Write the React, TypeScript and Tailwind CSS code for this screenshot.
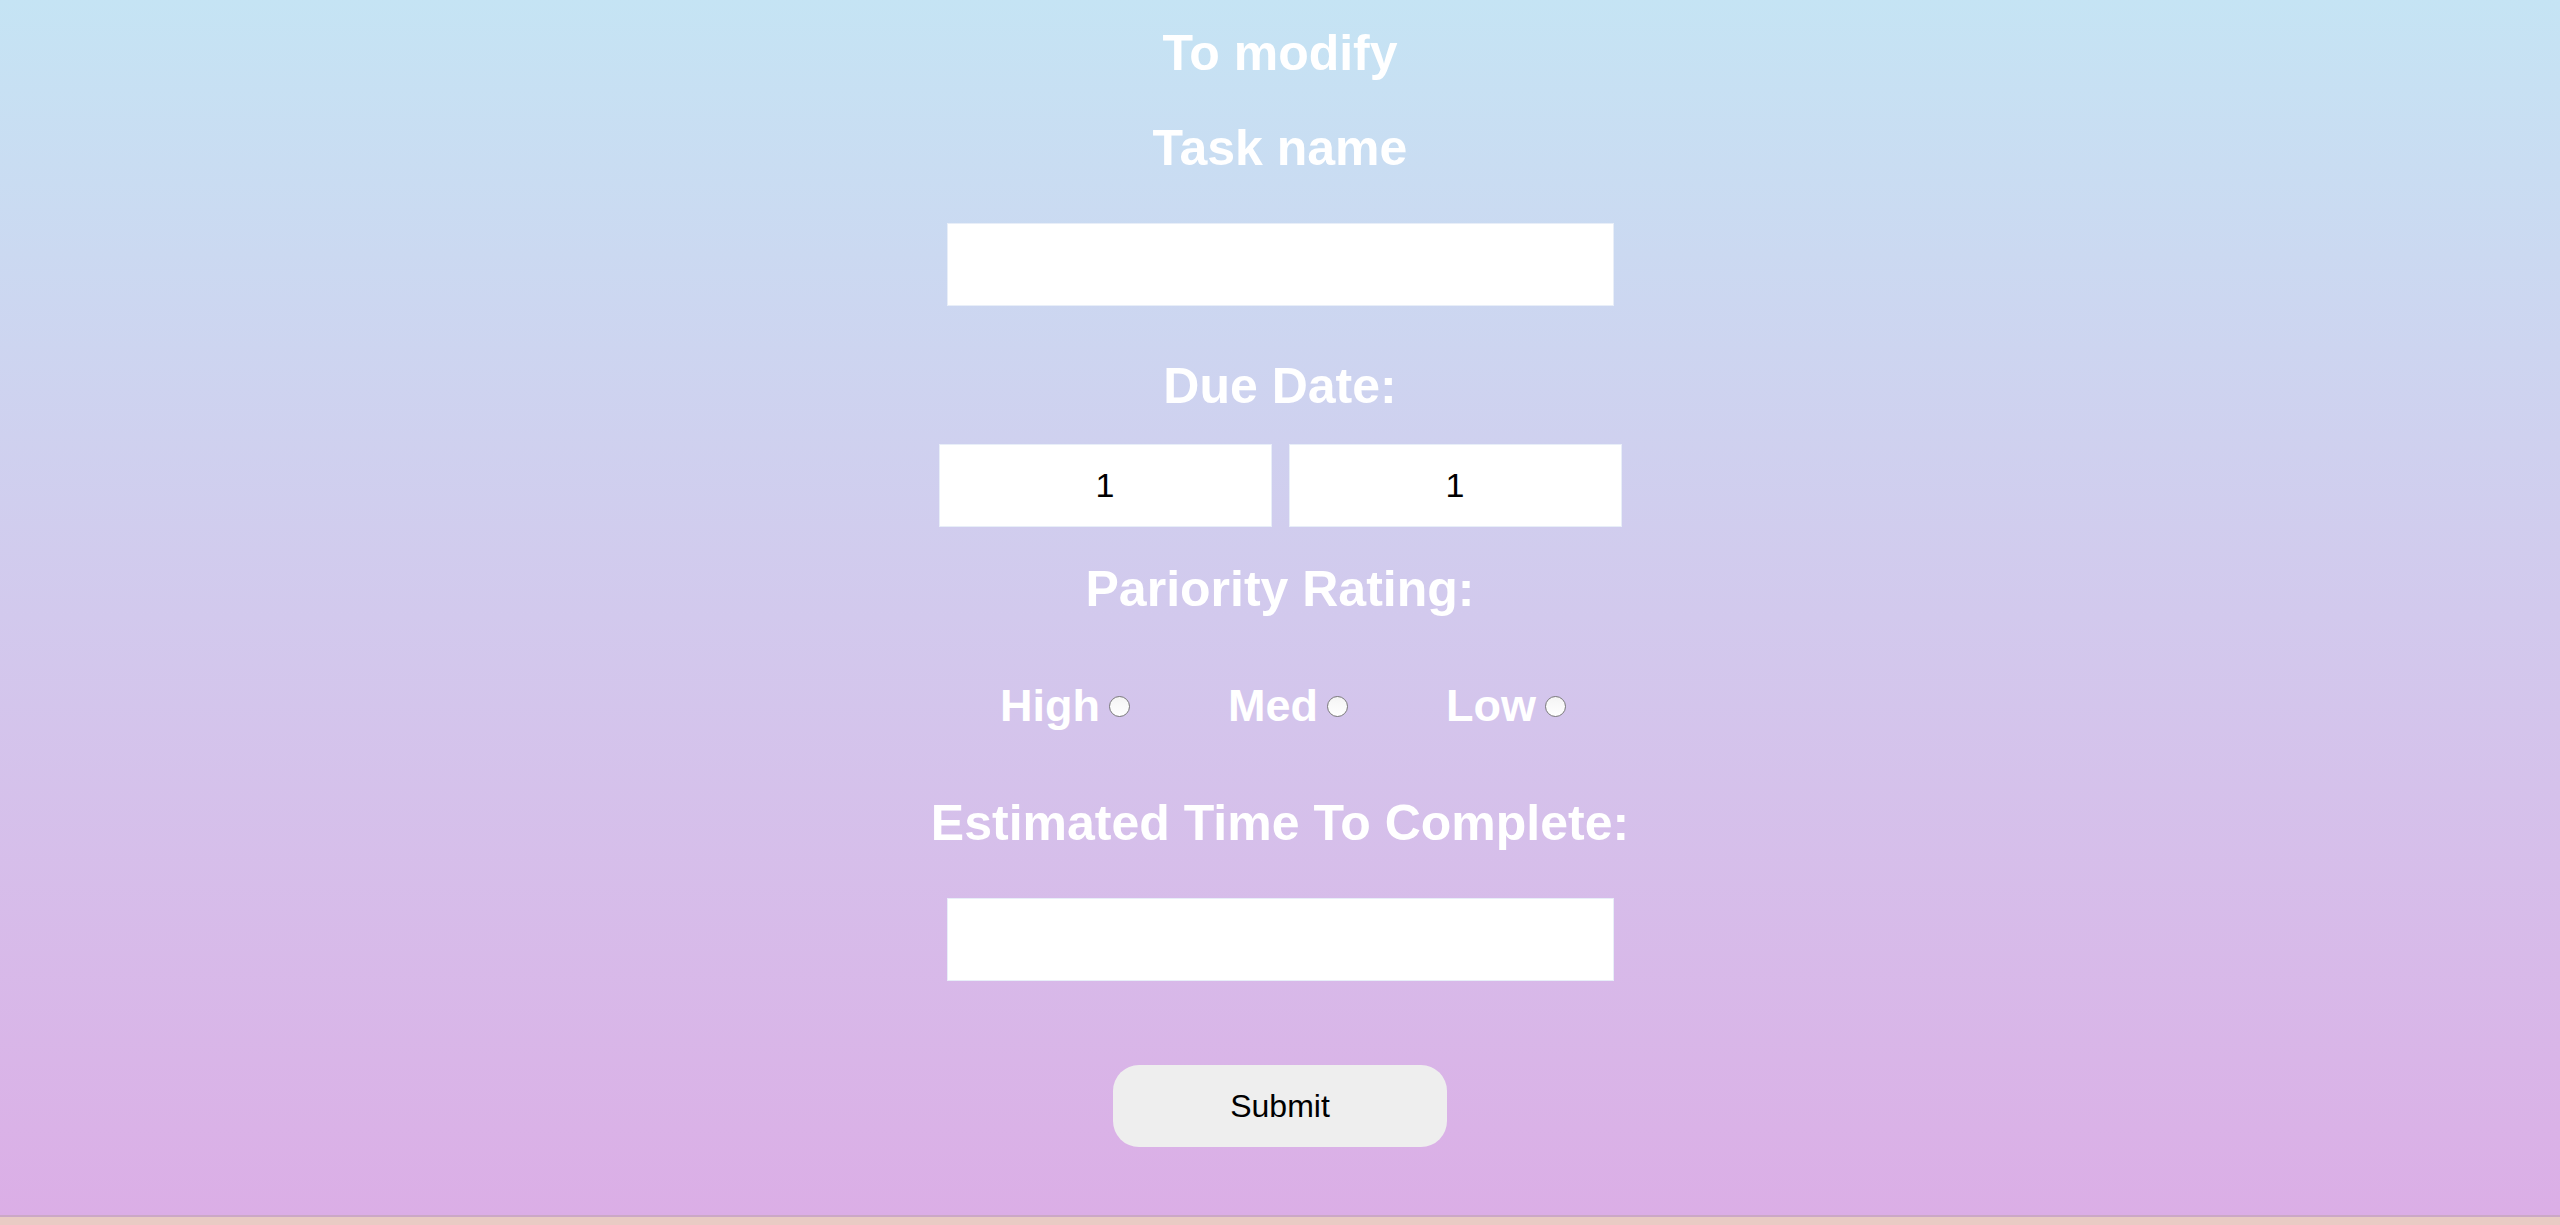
import React from "react";

const heading = "text-white font-bold text-[50px] leading-[50px] text-center";

function Radio() {
  return (
    <span className="inline-block w-[21px] h-[21px] rounded-full border-[1.5px] border-[#7a7a7a] bg-gradient-to-b from-[#f4f4f4] to-white ml-[9px]" />
  );
}

export default function App() {
  return (
    <div className="w-full h-[1225px] overflow-hidden bg-[#e9cbc4] flex flex-col" style={{ fontFamily: '"Liberation Sans", Arial, sans-serif' }}>
      <div className="h-[1217px] shrink-0 w-full bg-gradient-to-b from-[#c5e4f4] to-[#dbaee6] flex flex-col items-center border-b-2 border-[#cba8c6]">
        <div className={`${heading} mt-[28px]`}>To modify</div>
        <div className={`${heading} mt-[45px]`}>Task name</div>
        <input
          type="text"
          className="mt-[50px] w-[667px] h-[83px] bg-white border border-[#e8eef8] outline-none"
        />
        <div className={`${heading} mt-[55px]`}>Due Date:</div>
        <div className="mt-[33px] flex gap-[17px]">
          <input
            type="text"
            defaultValue="1"
            className="w-[333px] h-[83px] bg-white border border-[#e8eef8] text-center text-black text-[34px] outline-none"
          />
          <input
            type="text"
            defaultValue="1"
            className="w-[333px] h-[83px] bg-white border border-[#e8eef8] text-center text-black text-[34px] outline-none"
          />
        </div>
        <div className={`${heading} mt-[37px]`}>Pariority Rating:</div>
        <div className="mt-[69px] flex items-center gap-[98px] pl-[6px] text-white font-bold text-[45px] leading-[46px]">
          <label className="flex items-center">
            <span>High</span>
            <Radio />
          </label>
          <label className="flex items-center">
            <span>Med</span>
            <Radio />
          </label>
          <label className="flex items-center">
            <span>Low</span>
            <Radio />
          </label>
        </div>
        <div className={`${heading} mt-[69px]`}>Estimated Time To Complete:</div>
        <input
          type="text"
          className="mt-[50px] w-[667px] h-[83px] bg-white border border-[#e8eef8] outline-none"
        />
        <button className="mt-[84px] w-[334px] h-[82px] rounded-[26px] bg-[#eeeeee] text-black text-[32px]">
          Submit
        </button>
      </div>
    </div>
  );
}
